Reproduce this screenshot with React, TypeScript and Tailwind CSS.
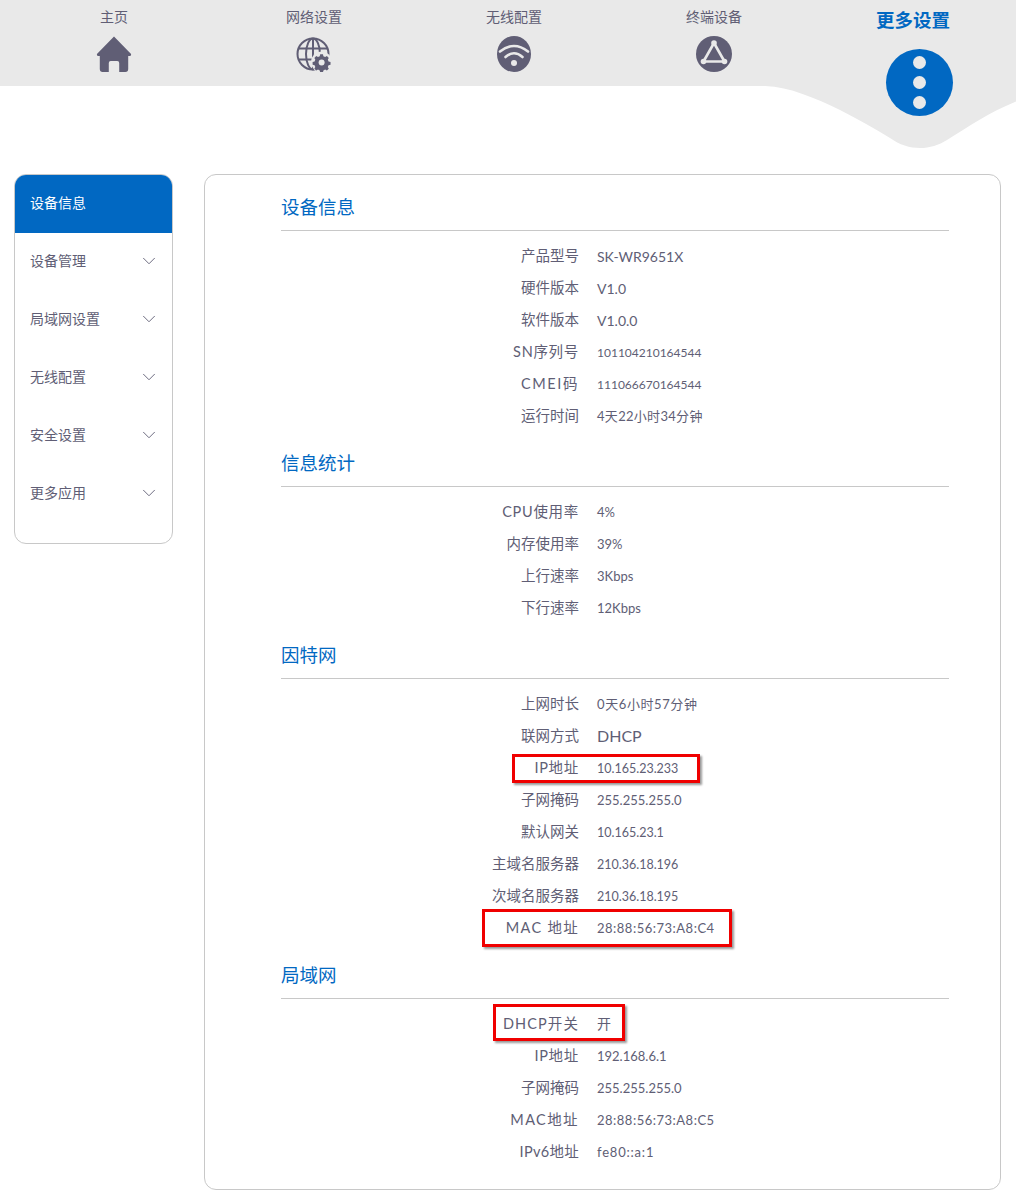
import { ChevronDown } from "lucide-react";
import type { ReactNode } from "react";

const Home = () => (
  <svg width="36" height="36" viewBox="0 0 38 36" preserveAspectRatio="none" className="block">
    <path d="M19 0.5 L37 18 Q37.5 19.5 36 20 H34 V33 Q34 36 31 36 H24.5 V27 Q24.5 25 22.5 25 H15.5 Q13.5 25 13.5 27 V36 H7 Q4 36 4 33 V20 H2 Q0.5 19.5 1 18 Z" fill="#605e75" />
  </svg>
);

const Globe = () => (
  <svg width="36" height="36" viewBox="0 0 36 36" className="block">
    <g fill="none" stroke="#605e75" strokeWidth="2">
      <circle cx="17" cy="18" r="15.5" />
      <ellipse cx="17" cy="18" rx="7" ry="15.5" />
      <path d="M17 2.5 V33.5 M2 12.5 H32 M2 23.5 H32" />
    </g>
    <circle cx="25.5" cy="26" r="10.5" fill="#e9e9e9" />
    <path d="M24 17.5 h3.2 l.5 2.2 2 .9 2-1.1 2.2 2.3-1.1 1.9 .8 2.1 2.3 .6 v3.1 l-2.3 .6-.8 2 1.1 2-2.2 2.2-2-1.1-2 .9-.5 2.2 H24 l-.5-2.2-2-.9-2 1.1-2.2-2.2 1.1-2-.8-2-2.3-.6 v-3.1 l2.3-.6 .8-2.1-1.1-1.9 2.2-2.3 2 1.1 2-.9 Z" transform="translate(3.3 3) scale(.87)" fill="#605e75" />
    <circle cx="25.6" cy="26.5" r="3" fill="#e9e9e9" />
  </svg>
);

const Wifi = () => (
  <svg width="36" height="36" viewBox="0 0 36 36" className="block">
    <ellipse cx="18" cy="18" rx="17" ry="18" fill="#605e75" />
    <g fill="none" stroke="#e9e9e9" strokeWidth="2.6" strokeLinecap="round">
      <path d="M4 15.5 Q18 4.5 32 15.5" />
      <path d="M9.5 21 Q18 13.5 26.5 21" />
    </g>
    <circle cx="18" cy="27" r="3" fill="#e9e9e9" />
  </svg>
);

const Nodes = () => (
  <svg width="36" height="36" viewBox="0 0 36 36" className="block">
    <circle cx="18" cy="18" r="18" fill="#605e75" />
    <path d="M18 7 L7.5 25.5 H28.5 Z" fill="none" stroke="#e9e9e9" strokeWidth="2.6" strokeLinejoin="round" />
    <circle cx="18" cy="7" r="2.8" fill="#e9e9e9" />
    <circle cx="7.5" cy="25.5" r="2.8" fill="#e9e9e9" />
    <circle cx="28.5" cy="25.5" r="2.8" fill="#e9e9e9" />
  </svg>
);

const Tab = ({ label, icon }: { label: string; icon: ReactNode }) => (
  <div className="w-[200px] shrink-0 flex flex-col items-center">
    <div className="h-9 pt-[8px] text-[14px] leading-[18px]">{label}</div>
    {icon}
  </div>
);

type R = { l: string; v: string; lc?: string; vc?: string; box?: string };

const big = "text-[16px]";
const sections: { title: string; rows: R[] }[] = [
  {
    title: "设备信息",
    rows: [
      { l: "产品型号", v: "SK-WR9651X", vc: "text-[14px]" },
      { l: "硬件版本", v: "V1.0", vc: "text-[14px]" },
      { l: "软件版本", v: "V1.0.0", vc: "text-[14px]" },
      { l: "SN序列号", v: "101104210164544", lc: "tracking-[0.7px]", vc: "text-[12px] pt-px" },
      { l: "CMEI码", v: "111066670164544", lc: "tracking-[1.6px]", vc: "text-[12px] pt-px" },
      { l: "运行时间", v: "4天22小时34分钟", vc: "text-[13px] tracking-[0.3px] pt-px" },
    ],
  },
  {
    title: "信息统计",
    rows: [
      { l: "CPU使用率", v: "4%", lc: "tracking-[0.7px]", vc: "text-[13px] pt-px" },
      { l: "内存使用率", v: "39%", vc: "text-[13px] pt-px" },
      { l: "上行速率", v: "3Kbps", vc: "text-[13px] pt-px" },
      { l: "下行速率", v: "12Kbps", vc: "text-[13px] pt-px" },
    ],
  },
  {
    title: "因特网",
    rows: [
      { l: "上网时长", v: "0天6小时57分钟", vc: "text-[13px] tracking-[0.6px] pt-px" },
      { l: "联网方式", v: "DHCP", vc: big },
      { l: "IP地址", v: "10.165.23.233", lc: "tracking-[0.7px]", vc: "text-[12.5px] pt-[2px]", box: "left-[231px] top-[2px] w-[188px] h-[29px]" },
      { l: "子网掩码", v: "255.255.255.0", vc: "text-[13px] pt-px" },
      { l: "默认网关", v: "10.165.23.1", vc: "text-[12.5px] pt-[2px]" },
      { l: "主域名服务器", v: "210.36.18.196", vc: "text-[12.5px] pt-[2px]" },
      { l: "次域名服务器", v: "210.36.18.195", vc: "text-[12.5px] pt-[2px]" },
      { l: "MAC 地址", v: "28:88:56:73:A8:C4", lc: "tracking-[1.3px]", vc: "text-[13px] tracking-[0.5px] pt-px", box: "left-[201px] top-[-3px] w-[250px] h-[38px]" },
    ],
  },
  {
    title: "局域网",
    rows: [
      { l: "DHCP开关", v: "开", lc: "tracking-[1.1px]", vc: "text-[14px] pb-[2px]", box: "left-[212px] top-[-4px] w-[132px] h-[37px]" },
      { l: "IP地址", v: "192.168.6.1", lc: "tracking-[0.7px]", vc: "text-[13px] pt-px" },
      { l: "子网掩码", v: "255.255.255.0", vc: "text-[13px] pt-px" },
      { l: "MAC地址", v: "28:88:56:73:A8:C5", lc: "tracking-[1.4px]", vc: "text-[13px] tracking-[0.5px] pt-px" },
      { l: "IPv6地址", v: "fe80::a:1", lc: "tracking-[0.3px]", vc: "text-[13px] tracking-[0.8px] pt-px" },
    ],
  },
];

const menu = ["设备管理", "局域网设置", "无线配置", "安全设置", "更多应用"];

export default function App() {
  return (
    <div className="relative w-[1016px] h-[1195px] overflow-hidden bg-white text-[#605e75] font-['Lato','Noto_Sans_CJK_SC',sans-serif]">
      <svg width="1016" height="150" viewBox="0 0 1016 150" className="absolute left-0 top-0">
        <path d="M0 0 H1016 V101.5 C990 112 968 127 947 140 C930 151 908 151 890 138 C875 129 858 119 840 110 C815 98 790 87 765 86 H0 Z" fill="#e9e9e9" />
      </svg>

      <header className="relative h-[85px] pl-[14px] flex items-start">
        <Tab label="主页" icon={<Home />} />
        <Tab label="网络设置" icon={<Globe />} />
        <Tab label="无线配置" icon={<Wifi />} />
        <Tab label="终端设备" icon={<Nodes />} />
        <div className="w-[210px] shrink-0 flex flex-col items-center text-[#0168c2]">
          <div className="h-[49px] pt-[9px] pr-[12px] text-[18.5px] leading-[22px] font-bold">更多设置</div>
          <div className="w-[67px] h-[67px] rounded-full bg-[#0168c2] flex flex-col items-center justify-center gap-[7px]">
            <span className="w-[13px] h-[13px] rounded-full bg-[#e9e9e9]" />
            <span className="w-[13px] h-[13px] rounded-full bg-[#e9e9e9]" />
            <span className="w-[13px] h-[13px] rounded-full bg-[#e9e9e9]" />
          </div>
        </div>
      </header>

      <div className="relative mt-[89px] pl-[14px] flex items-start gap-[31px]">
        <aside className="w-[159px] h-[370px] border border-[#c8c8c8] rounded-[12px] overflow-hidden text-[14px]">
          <div className="h-[58px] pb-[3px] bg-[#0168c2] text-white flex items-center pl-[15px]">设备信息</div>
          {menu.map((m) => (
            <div key={m} className="h-[58px] pb-[3px] flex items-center justify-between pl-[15px] pr-[12px]">
              <span>{m}</span>
              <ChevronDown size={22} strokeWidth={1} />
            </div>
          ))}
        </aside>

        <main className="w-[797px] h-[1016px] border border-[#c8c8c8] rounded-[12px] pt-px pl-[76px] pr-[51px]">
          {sections.map((s) => (
            <section key={s.title}>
              <h2 className="h-[55px] border-b border-[#c8c8c8] pt-[20px] text-[18.5px] leading-[22px] text-[#0168c2] mb-[9px]">{s.title}</h2>
              {s.rows.map((r) => (
                <div key={r.l + r.v} className="relative h-8 flex items-center">
                  <div className={`w-[298px] text-right text-[14.5px] ${r.lc ?? ""}`}>{r.l}</div>
                  <div className={`ml-[18px] ${r.vc ?? "text-[13px]"}`}>{r.v}</div>
                  {r.box && (
                    <div className={`absolute border-[3px] border-[#f00000] shadow-[2px_2px_2px_rgba(0,0,0,0.4)] ${r.box}`} />
                  )}
                </div>
              ))}
            </section>
          ))}
        </main>
      </div>
    </div>
  );
}
